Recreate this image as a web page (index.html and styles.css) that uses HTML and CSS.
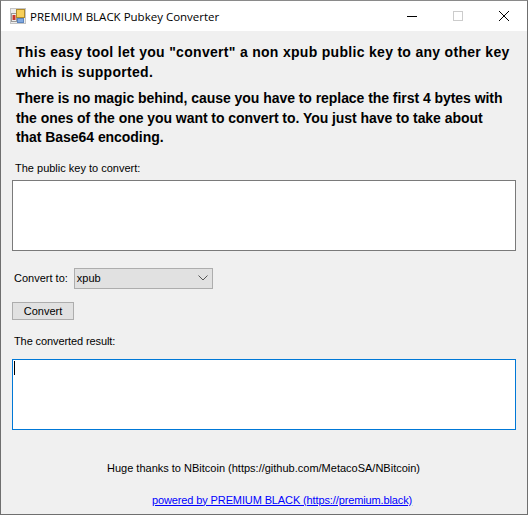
FILE: index.html
```html
<!DOCTYPE html>
<html lang="en">
<head>
    <meta charset="UTF-8">
    <meta name="viewport" content="width=device-width, initial-scale=1.0">
    <title>PREMIUM BLACK Pubkey Converter</title>
    <link rel="stylesheet" href="styles.css">
</head>
<body>
    <div class="window">
        <div class="titlebar">
            <svg class="app-icon" width="16" height="16" viewBox="0 0 16 16">
                <rect x="0.5" y="0.5" width="15" height="15" fill="#ececec" stroke="#c4c4c4"/>
                <rect x="1.5" y="5.5" width="5" height="8" fill="#eee" stroke="#9a9a9a"/>
                <rect x="2.5" y="7" width="3" height="5" fill="#c8372d"/>
                <rect x="6.5" y="1.5" width="8" height="8" fill="#f7cf5a" stroke="#b08a2a"/>
                <rect x="7.5" y="10.5" width="6" height="4" fill="#7fa8e0" stroke="#5b84bd"/>
            </svg>
            <span class="title">PREMIUM BLACK Pubkey Converter</span>
            <div class="controls">
                <svg class="ctl" width="46" height="30" viewBox="0 0 46 30"><path d="M18 15.5h10" stroke="#000" fill="none"/></svg>
                <svg class="ctl" width="46" height="30" viewBox="0 0 46 30"><rect x="18.5" y="10.5" width="9" height="9" stroke="#ccc" fill="none"/></svg>
                <svg class="ctl" width="46" height="30" viewBox="0 0 46 30"><path d="M18 10l10 10M28 10l-10 10" stroke="#000" fill="none"/></svg>
            </div>
        </div>
        <div class="content">
            <p class="intro">This easy tool let you "convert" a non xpub public key to any other key which is supported.</p>
            <p class="intro second">There is no magic behind, cause you have to replace the first 4 bytes with the ones of the one you want to convert to. You just have to take about that Base64 encoding.</p>
            <label class="field-label">The public key to convert:</label>
            <div class="textbox"></div>
            <div class="convert-row">
                <label>Convert to:</label>
                <div class="combo">
                    <span>xpub</span>
                    <svg width="10" height="6" viewBox="0 0 10 6"><path d="M0.5 0.5L5 5l4.5-4.5" stroke="#555" fill="none"/></svg>
                </div>
            </div>
            <button class="convert-button">Convert</button>
            <label class="field-label result-label">The converted result:</label>
            <div class="textbox focused"><span class="caret"></span></div>
            <p class="thanks">Huge thanks to NBitcoin (https://github.com/MetacoSA/NBitcoin)</p>
            <a class="powered" href="#">powered by PREMIUM BLACK (https://premium.black)</a>
        </div>
    </div>
</body>
</html>
```

FILE: styles.css
```css
html, body {
    margin: 0;
    height: 100%;
}

body {
    font-family: "Liberation Sans", Arial, sans-serif;
    font-size: 11px;
    color: #000;
}

.window {
    box-sizing: border-box;
    width: 528px;
    height: 515px;
    display: flex;
    flex-direction: column;
    background-color: #f0f0f0;
    border: 1px solid #6f6f6f;
    border-top-color: #8a8a8a;
}

.titlebar {
    height: 30px;
    flex: none;
    display: flex;
    align-items: center;
    background-color: #fff;
}

.app-icon {
    margin-left: 9px;
}

.title {
    margin-left: 4px;
    font-family: "Open Sans", sans-serif;
    font-size: 11.5px;
}

.controls {
    margin-left: auto;
    display: flex;
}

.ctl {
    display: block;
}

.content {
    flex: 1;
    display: flex;
    flex-direction: column;
    padding: 12px 11px 0 11px;
}

.intro {
    margin: 0 0 0 4px;
    font-size: 14px;
    font-weight: bold;
    line-height: 19.5px;
    letter-spacing: 0.3px;
}

.second {
    margin-top: 7px;
    padding-right: 10px;
    letter-spacing: -0.05px;
}

.field-label {
    margin: 13px 0 0 3px;
    line-height: 14px;
}

.textbox {
    box-sizing: border-box;
    height: 71px;
    margin-top: 5px;
    background-color: #fff;
    border: 1px solid #7a7a7a;
}

.focused {
    margin-top: 11px;
    border-color: #0078d7;
    padding: 1px;
}

.caret {
    display: block;
    width: 1px;
    height: 14px;
    background-color: #000;
}

.convert-row {
    display: flex;
    align-items: center;
    margin-top: 17px;
    padding-left: 2px;
    gap: 6px;
}

.combo {
    box-sizing: border-box;
    width: 139px;
    height: 21px;
    display: flex;
    align-items: center;
    justify-content: space-between;
    padding: 0 4px 0 2px;
    background-color: #e1e1e1;
    border: 1px solid #adadad;
}

.convert-button {
    box-sizing: border-box;
    width: 62px;
    height: 18px;
    margin-top: 13px;
    padding: 0;
    font-family: inherit;
    font-size: 11px;
    background-color: #e1e1e1;
    border: 1px solid #adadad;
}

.result-label {
    margin-top: 14px;
    margin-left: 2px;
    letter-spacing: -0.1px;
}

.thanks {
    margin: 31px 0 0 0;
    padding-left: 95px;
    line-height: 14px;
}

.powered {
    margin-top: 18px;
    padding-left: 140px;
    color: #0000ff;
    line-height: 14px;
    letter-spacing: -0.12px;
}
```
